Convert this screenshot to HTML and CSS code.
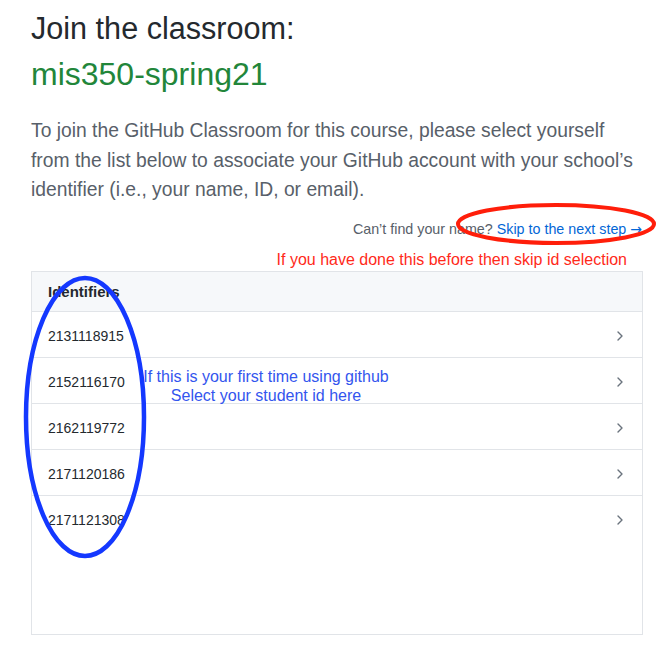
FILE: index.html
```html
<!DOCTYPE html>
<html>
<head>
<meta charset="utf-8">
<link rel="stylesheet" href="styles.css">
</head>
<body>
<div class="page">
  <h1 class="title">Join the classroom:</h1>
  <h2 class="classroom">mis350-spring21</h2>
  <p class="lead">To join the GitHub Classroom for this course, please select yourself from the list below to associate your GitHub account with your school’s identifier (i.e., your name, ID, or email).</p>
  <div class="skip">Can’t find your name? <a class="skip-link" href="#">Skip to the next step <span class="arrow">→</span></a></div>
  <div class="note-red">If you have done this before then skip id selection</div>
  <div class="box">
    <div class="box-header">Identifiers</div>
    <div class="row"><span>2131118915</span><svg class="chev" viewBox="0 0 16 16" width="16" height="16"><path d="M6 4l4 4-4 4" fill="none" stroke="#6a737d" stroke-width="1.4" stroke-linecap="round" stroke-linejoin="round"/></svg></div>
    <div class="row"><span>2152116170</span><svg class="chev" viewBox="0 0 16 16" width="16" height="16"><path d="M6 4l4 4-4 4" fill="none" stroke="#6a737d" stroke-width="1.4" stroke-linecap="round" stroke-linejoin="round"/></svg></div>
    <div class="row"><span>2162119772</span><svg class="chev" viewBox="0 0 16 16" width="16" height="16"><path d="M6 4l4 4-4 4" fill="none" stroke="#6a737d" stroke-width="1.4" stroke-linecap="round" stroke-linejoin="round"/></svg></div>
    <div class="row"><span>2171120186</span><svg class="chev" viewBox="0 0 16 16" width="16" height="16"><path d="M6 4l4 4-4 4" fill="none" stroke="#6a737d" stroke-width="1.4" stroke-linecap="round" stroke-linejoin="round"/></svg></div>
    <div class="row last"><span>2171121308</span><svg class="chev" viewBox="0 0 16 16" width="16" height="16"><path d="M6 4l4 4-4 4" fill="none" stroke="#6a737d" stroke-width="1.4" stroke-linecap="round" stroke-linejoin="round"/></svg></div>
  </div>
  <div class="note-blue">If this is your first time using github<br>Select your student id here</div>
  <svg class="marks" width="665" height="652" viewBox="0 0 665 652">
    <ellipse cx="556" cy="224" rx="98" ry="19" fill="none" stroke="#ff1e0a" stroke-width="4"/>
    <ellipse cx="85" cy="417" rx="59" ry="139" fill="none" stroke="#1438ff" stroke-width="4.5"/>
  </svg>
</div>
</body>
</html>
```
FILE: styles.css
```css
* { box-sizing: border-box; }
html, body { margin: 0; padding: 0; background: #fff; }
body { font-family: "Liberation Sans", Arial, sans-serif; color: #24292e; }
.page { position: relative; width: 665px; height: 652px; padding: 8px 22px 0 31px; overflow: hidden; }
.title { margin: 0; font-size: 30.6px; font-weight: 400; line-height: 40px; color: #24292e; }
.classroom { margin: 6px 0 0; font-size: 32px; font-weight: 400; line-height: 40px; color: #22863a; }
.lead { margin: 22px -3px 0 0; font-size: 19.3px; line-height: 29.5px; color: #586069; }
.skip { margin-top: 15px; text-align: right; font-size: 14.3px; line-height: 18px; color: #586069; padding-right: 1px; }
.skip-link { color: #0366d6; text-decoration: none; }
.arrow { font-family: "DejaVu Sans", sans-serif; font-size: 14px; }
.note-red { margin-top: 13px; text-align: right; font-size: 16px; line-height: 18px; color: #ff2a1a; padding-right: 16px; }
.box { margin-top: 2px; border: 1px solid #e1e4e8; height: 364px; }
.box-header { background: #f6f8fa; border-bottom: 1px solid #e1e4e8; height: 40px; padding: 0 16px; display: flex; align-items: center; font-weight: 700; font-size: 15px; }
.row { height: 46px; display: flex; align-items: center; justify-content: space-between; padding: 3px 14px 0 16px; border-bottom: 1px solid #e1e4e8; font-size: 14px; }
.row.last { border-bottom: none; }
.chev { display: block; }
.note-blue { position: absolute; left: 136px; top: 367px; width: 260px; text-align: center; font-size: 16px; line-height: 19px; color: #3355ee; }
.marks { position: absolute; left: 0; top: 0; pointer-events: none; }
```
